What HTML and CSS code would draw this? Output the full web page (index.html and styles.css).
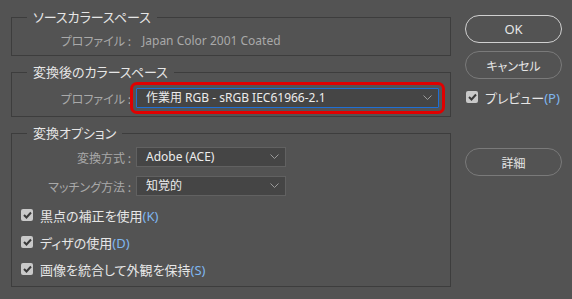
FILE: index.html
```html
<!DOCTYPE html>
<html lang="ja">
<head>
<meta charset="utf-8">
<link rel="stylesheet" href="styles.css">
</head>
<body>
<div class="dialog">
  <div class="main">
    <fieldset class="group g1">
      <legend>ソースカラースペース</legend>
      <div class="row">
        <span class="label">プロファイル :</span>
        <span class="value">Japan Color 2001 Coated</span>
      </div>
    </fieldset>
    <fieldset class="group g2">
      <legend>変換後のカラースペース</legend>
      <div class="row">
        <span class="label">プロファイル :</span>
        <div class="select wide focused">
          <span>作業用 RGB - sRGB IEC61966-2.1</span>
          <svg class="chev" width="9" height="6" viewBox="0 0 9 6"><polyline points="0.5,0.5 4.5,4.5 8.5,0.5" fill="none" stroke="#9a9a9a" stroke-width="1"/></svg>
        </div>
      </div>
    </fieldset>
    <fieldset class="group g3">
      <legend>変換オプション</legend>
      <div class="row">
        <span class="label">変換方式 :</span>
        <div class="select narrow">
          <span>Adobe (ACE)</span>
          <svg class="chev" width="9" height="6" viewBox="0 0 9 6"><polyline points="0.5,0.5 4.5,4.5 8.5,0.5" fill="none" stroke="#9a9a9a" stroke-width="1"/></svg>
        </div>
      </div>
      <div class="row r2">
        <span class="label">マッチング方法 :</span>
        <div class="select narrow">
          <span>知覚的</span>
          <svg class="chev" width="9" height="6" viewBox="0 0 9 6"><polyline points="0.5,0.5 4.5,4.5 8.5,0.5" fill="none" stroke="#9a9a9a" stroke-width="1"/></svg>
        </div>
      </div>
      <div class="checks">
        <div class="check"><span class="box"><svg width="9" height="8" viewBox="0 0 9 8"><polyline points="1,4 3.5,6.5 8,1.5" fill="none" stroke="#3a3a3a" stroke-width="2"/></svg></span><span class="ctext">黒点の補正を使用<span class="mn">(K)</span></span></div>
        <div class="check"><span class="box"><svg width="9" height="8" viewBox="0 0 9 8"><polyline points="1,4 3.5,6.5 8,1.5" fill="none" stroke="#3a3a3a" stroke-width="2"/></svg></span><span class="ctext">ディザの使用<span class="mn">(D)</span></span></div>
        <div class="check"><span class="box"><svg width="9" height="8" viewBox="0 0 9 8"><polyline points="1,4 3.5,6.5 8,1.5" fill="none" stroke="#3a3a3a" stroke-width="2"/></svg></span><span class="ctext">画像を統合して外観を保持<span class="mn">(S)</span></span></div>
      </div>
    </fieldset>
  </div>
  <div class="side">
    <button class="btn default">OK</button>
    <button class="btn">キャンセル</button>
    <div class="check preview"><span class="box"><svg width="9" height="8" viewBox="0 0 9 8"><polyline points="1,4 3.5,6.5 8,1.5" fill="none" stroke="#3a3a3a" stroke-width="2"/></svg></span><span class="ctext">プレビュー<span class="mn">(P)</span></span></div>
    <button class="btn detail">詳細</button>
  </div>
</div>
</body>
</html>
```
FILE: styles.css
```css
html, body {
  margin: 0;
  padding: 0;
  background: #535353;
  width: 572px;
  height: 299px;
  overflow: hidden;
}
body {
  font-family: "Noto Sans CJK JP", sans-serif;
  font-size: 12px;
  color: #e2e2e2;
  font-feature-settings: "palt";
}
.dialog {
  display: flex;
  padding-left: 11px;
  gap: 14px;
}
.main {
  width: 440px;
  display: flex;
  flex-direction: column;
  gap: 8px;
  padding-top: 9px;
}
.group {
  margin: 0;
  border: 1px solid #3d3d3d;
  padding: 0;
  min-width: 0;
}
.group legend {
  margin-left: 15px;
  padding: 0 6px;
  height: 16px;
  line-height: 16px;
  font-size: 13px;
  color: #e6e6e6;
}
.row {
  display: flex;
  align-items: center;
  height: 20px;
}
.label {
  width: 119px;
  text-align: right;
  color: #a9a9a9;
  flex: none;
  white-space: nowrap;
}
.g1 .row { margin: 5px 0 5px; }
.g1 .value {
  margin-left: 11px;
  color: #a9a9a9;
  font-family: "Noto Sans", "Noto Sans CJK JP", sans-serif;
}
.g2 .row { margin: 8px 0 8px; }
.select {
  box-sizing: border-box;
  margin-left: 5px;
  height: 20px;
  background: #454545;
  border: 1px solid #616161;
  display: flex;
  align-items: center;
  justify-content: space-between;
  padding: 0 6px 0 9px;
  color: #ececec;
  font-family: "Noto Sans", "Noto Sans CJK JP", sans-serif;
}
.select span { line-height: 18px; white-space: nowrap; }
.select.wide { width: 303px; }
.select.narrow { width: 150px; }
.select.focused {
  border-color: #1e6fd6;
  outline: 3px solid #e00000;
  outline-offset: 3px;
  border-radius: 1px;
}
.chev { flex: none; }
.g3 .row { margin-top: 6px; }
.g3 .row.r2 { margin-top: 9px; }
.checks {
  display: flex;
  flex-direction: column;
  gap: 7px;
  margin: 9px 0 7px 9px;
}
.check {
  display: flex;
  align-items: center;
  height: 20px;
  gap: 7px;
  font-size: 13px;
  color: #e6e6e6;
}
.ctext { white-space: nowrap; }
.box {
  width: 12px;
  height: 12px;
  border-radius: 2px;
  background: #c9c9c9;
  display: flex;
  align-items: center;
  justify-content: center;
  flex: none;
}
.mn {
  color: #7fb7f0;
  font-family: "Noto Sans", sans-serif;
}
.side {
  width: 97px;
  display: flex;
  flex-direction: column;
  padding-top: 15px;
}
.btn {
  box-sizing: border-box;
  height: 28px;
  width: 97px;
  border-radius: 14px;
  background: transparent;
  border: 1px solid #7a7a7a;
  color: #e6e6e6;
  font-family: "Noto Sans CJK JP", sans-serif;
  font-feature-settings: "palt";
  font-size: 12px;
  padding: 0;
}
.btn.default {
  border: 1.5px solid #d0d0d0;
  font-family: "Noto Sans", sans-serif;
  font-size: 13px;
}
.btn + .btn { margin-top: 8px; }
.preview {
  margin-top: 9px;
  margin-left: 1px;
  height: 18px;
  gap: 7px;
}
.btn.detail { margin-top: 42px; }
```
